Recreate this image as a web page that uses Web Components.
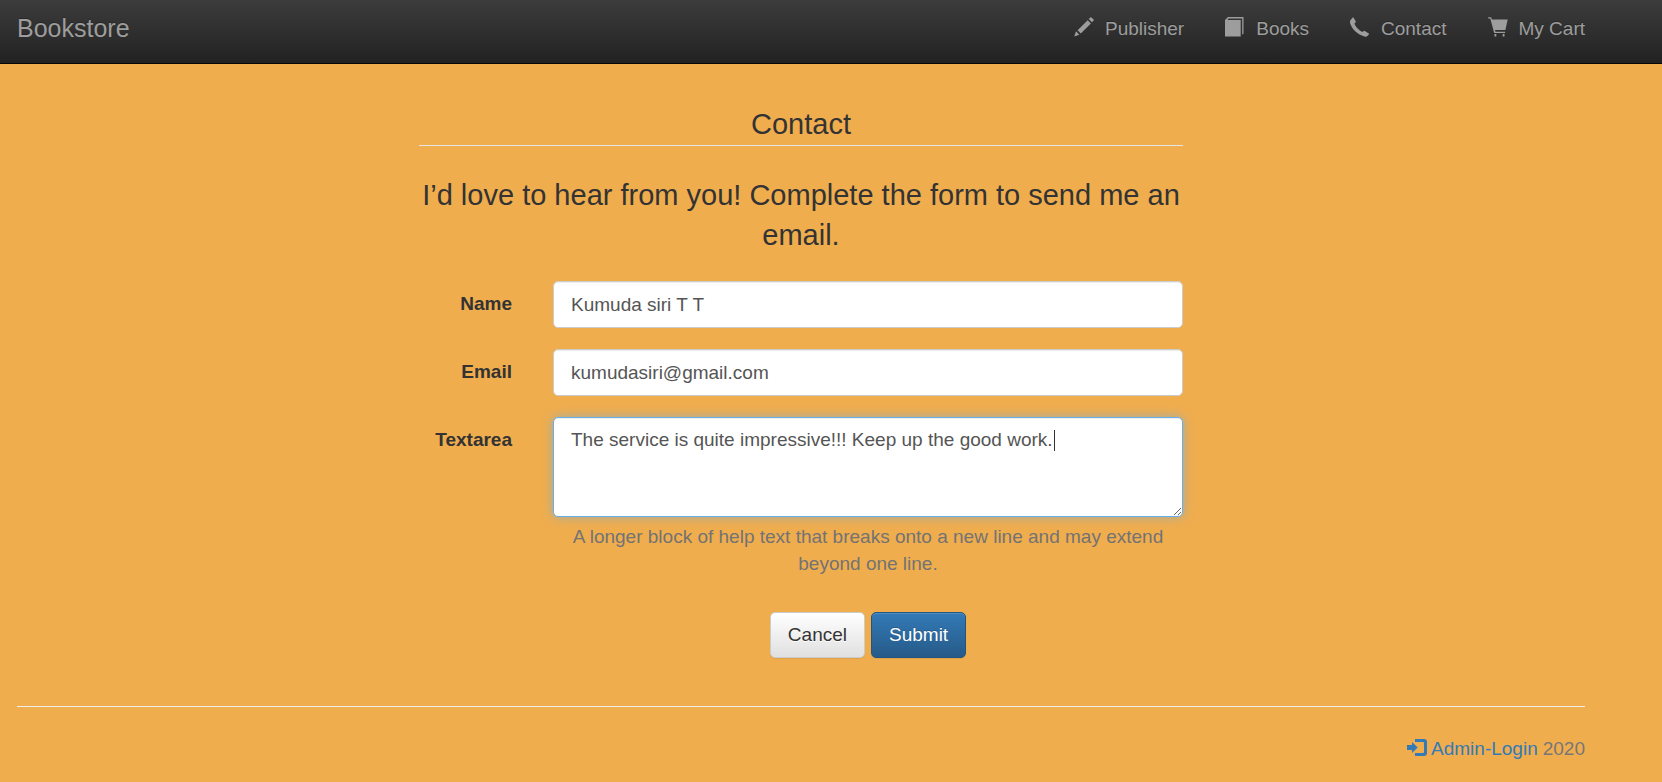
<!DOCTYPE html>
<html lang="en">
<head>
<meta charset="utf-8">
<meta name="viewport" content="width=device-width, initial-scale=1">
<title>Bookstore - Contact</title>
<style>
  body { margin: 0; background: #f0ad4e; color: #333; font: 19px/27px "Liberation Sans", Arial, sans-serif; }
</style>
</head>
<body>
<store-page></store-page>

<template id="tpl-page">
  <style>
    :host { display: block; }
    main { padding: 0 77px 0 17px; }
  </style>
  <store-navbar>
    <nav-item icon="pencil" href="#publisher">Publisher</nav-item>
    <nav-item icon="book" href="#books">Books</nav-item>
    <nav-item icon="phone" href="#contact">Contact</nav-item>
    <nav-item icon="cart" href="#cart">My Cart</nav-item>
  </store-navbar>
  <main>
    <contact-form></contact-form>
    <store-footer></store-footer>
  </main>
</template>

<template id="tpl-navbar">
  <style>
    :host { display: block; }
    header { box-sizing: border-box; min-height: 64px; display: flex; justify-content: space-between; align-items: center; flex-wrap: wrap; padding: 0 77px 7px 17px; background: linear-gradient(#3c3c3c, #222); border-bottom: 1px solid #080808; }
    .brand { color: #9d9d9d; font-size: 25px; text-decoration: none; text-shadow: 0 -1px 0 rgba(0,0,0,.25); }
    nav { display: flex; gap: 41px; }
  </style>
  <header>
    <a class="brand" href="#home">Bookstore</a>
    <nav><slot></slot></nav>
  </header>
</template>

<template id="tpl-nav-item">
  <style>
    :host { display: block; }
    a { display: flex; align-items: center; gap: 11px; color: #9d9d9d; text-decoration: none; text-shadow: 0 -1px 0 rgba(0,0,0,.25); white-space: nowrap; }
    glyph-icon { padding-bottom: 3px; }
  </style>
  <a><glyph-icon></glyph-icon><span><slot></slot></span></a>
</template>

<template id="tpl-form">
  <style>
    :host { display: block; width: calc(50% - 20px); margin: 0 auto; padding-top: 40px; }
    fieldset { min-width: 0; margin: 0; padding: 0; border: 0; }
    legend { box-sizing: border-box; width: 100%; padding: 0 0 1px; margin-bottom: 29px; border-bottom: 1px solid #e5e5e5; font-size: 29px; line-height: 40px; text-align: center; }
    .intro { margin: 0 0 26px; font-size: 29px; line-height: 40px; text-align: center; }
    form-row { margin-bottom: 21px; }
    .actions { display: flex; justify-content: center; gap: 6px; }
    button { font: inherit; line-height: 28px; padding: 8px 17px; border: 1px solid #ccc; border-radius: 5px; color: #333; background: linear-gradient(#fff, #e0e0e0); text-shadow: 0 1px 0 #fff; box-shadow: inset 0 1px 0 rgba(255,255,255,.15), 0 1px 1px rgba(0,0,0,.075); }
    button.primary { color: #fff; border-color: #245580; background: linear-gradient(#337ab7, #265a88); text-shadow: 0 -1px 0 rgba(0,0,0,.2); }
  </style>
  <form>
    <fieldset>
      <legend>Contact</legend>
      <p class="intro">I’d love to hear from you! Complete the form to send me an email.</p>
      <form-row label="Name" type="text" value="Kumuda siri T T"></form-row>
      <form-row label="Email" type="text" value="kumudasiri@gmail.com"></form-row>
      <form-row label="Textarea" type="textarea" value="The service is quite impressive!!! Keep up the good work.">A longer block of help text that breaks onto a new line and may extend beyond one line.</form-row>
      <form-row type="none"><div class="actions"><button type="reset">Cancel</button><button type="submit" class="primary">Submit</button></div></form-row>
    </fieldset>
  </form>
</template>

<template id="tpl-row">
  <style>
    :host { display: block; }
    .row { display: grid; grid-template-columns: 93px minmax(0, 1fr); column-gap: 41px; }
    .cell { position: relative; }
    label { padding-top: 9px; font-weight: bold; text-align: right; }
    .control { box-sizing: border-box; display: block; width: 100%; height: 47px; margin: 0; padding: 8px 17px; font: inherit; color: #555; background: #fff; border: 1px solid #ccc; border-radius: 5px; box-shadow: inset 0 1px 1px rgba(0,0,0,.075); outline: 0; }
    textarea.control { height: 100px; resize: vertical; border-color: #66afe9; box-shadow: inset 0 1px 1px rgba(0,0,0,.075), 0 0 11px rgba(102,175,233,.6); }
    .help { margin: 6px 0 14px; color: #737373; text-align: center; }
    /* Steady caret shown at the end of the message until the user edits it */
    .steady { caret-color: transparent; }
    .caret { position: absolute; top: 13px; left: 501px; width: 1px; height: 21px; background: #333; pointer-events: none; }
  </style>
  <div class="row"></div>
</template>

<template id="tpl-footer">
  <style>
    :host { display: block; margin-top: 27px; }
    footer { display: flex; justify-content: flex-end; gap: 5px; padding: 28px 0 19px; border-top: 1px solid #eee; color: #777; }
    a { display: flex; align-items: center; gap: 4px; color: #337ab7; text-decoration: none; }
    glyph-icon { padding-bottom: 1px; }
  </style>
  <footer><a href="#admin"><glyph-icon name="login"></glyph-icon><span>Admin-Login</span></a><span>2020</span></footer>
</template>

<script>
const stamp = (el, id) => {
  const root = el.attachShadow({ mode: "open" });
  root.append(document.getElementById(id).content.cloneNode(true));
  return root;
};

const glyphs = {
  pencil: '<path d="M.2 19.500L2 14.300l3.400 3.400zM3.600 13.300L13.700 3.200l3.200 3.200L6.800 16.500zM14.700 2.100L16.300.6q.6-.6 1.200 0l2 2q.6.6 0 1.200l-1.600 1.500z"/>',
  book: '<path d="M0 3L3 0h15.500v16.500l-1.300 1.200V1.500H3.700L2.400 2.900H15.700v16.600H0z"/>',
  phone: '<path d="M.6 3L2.700.6q.5-.5.900.1L5.700 4.200q.3.500-.1 1L4.400 6.700q2.100 5 7.800 8.400l1.600-1.200q.5-.4 1 0l4 2.700q.5.500 0 1l-1.700 1.600q-1 .8-2.600.3C7.500 17.300 2.300 12.600.1 6.200Q-.3 4.300.6 3z"/>',
  cart: '<path d="M0 .9Q0 .2.800.2h2.300l.9 2.400h15.700l-2.300 10.300H7l.5 1.900h9.600v1.300H6.200L2.300 1.600H.8Q0 1.600 0 .9zM6.500 17h1.800v2.500H6.500zM14.700 17h1.800v2.500h-1.800z"/>',
  login: '<path d="M8 1h9q3 0 3 3v11q0 3-3 3H8v-3h8q1 0 1-1V5q0-1-1-1H8zM0 7h5V4l5.700 5.500L5 15v-3H0z"/>'
};

customElements.define("glyph-icon", class extends HTMLElement {
  static observedAttributes = ["name"];
  constructor() { super(); this.attachShadow({ mode: "open" }); }
  attributeChangedCallback() {
    this.shadowRoot.innerHTML = `<style>:host { display: block; } svg { display: block; width: 20px; height: 20px; fill: currentColor; }</style><svg viewBox="0 0 20 20" aria-hidden="true">${glyphs[this.getAttribute("name")] || ""}</svg>`;
  }
});

customElements.define("nav-item", class extends HTMLElement {
  constructor() { super(); stamp(this, "tpl-nav-item"); }
  connectedCallback() {
    this.shadowRoot.querySelector("glyph-icon").setAttribute("name", this.getAttribute("icon"));
    this.shadowRoot.querySelector("a").setAttribute("href", this.getAttribute("href"));
  }
});

customElements.define("form-row", class extends HTMLElement {
  constructor() { super(); stamp(this, "tpl-row"); }
  connectedCallback() {
    const row = this.shadowRoot.querySelector(".row");
    const type = this.getAttribute("type");
    const cell = document.createElement("div");
    cell.className = "cell";
    if (type === "none") {
      cell.innerHTML = "<slot></slot>";
      row.replaceChildren(document.createElement("span"), cell);
      return;
    }
    const label = document.createElement("label");
    label.htmlFor = "control";
    label.textContent = this.getAttribute("label");
    const control = document.createElement(type === "textarea" ? "textarea" : "input");
    control.id = "control";
    control.className = "control";
    control.value = this.getAttribute("value");
    cell.append(control);
    row.replaceChildren(label, cell);
    if (type !== "textarea") return;
    const help = document.createElement("p");
    help.className = "help";
    help.append(document.createElement("slot"));
    const caret = document.createElement("i");
    caret.className = "caret";
    cell.append(help, caret);
    control.classList.add("steady");
    control.focus();
    control.setSelectionRange(control.value.length, control.value.length);
    const release = () => { caret.remove(); control.classList.remove("steady"); };
    for (const type of ["input", "keydown", "pointerdown"]) control.addEventListener(type, release, { once: true });
  }
});

for (const [tag, id] of [["contact-form", "tpl-form"], ["store-navbar", "tpl-navbar"], ["store-footer", "tpl-footer"], ["store-page", "tpl-page"]]) {
  customElements.define(tag, class extends HTMLElement {
    constructor() { super(); stamp(this, id); }
  });
}
</script>
</body>
</html>
